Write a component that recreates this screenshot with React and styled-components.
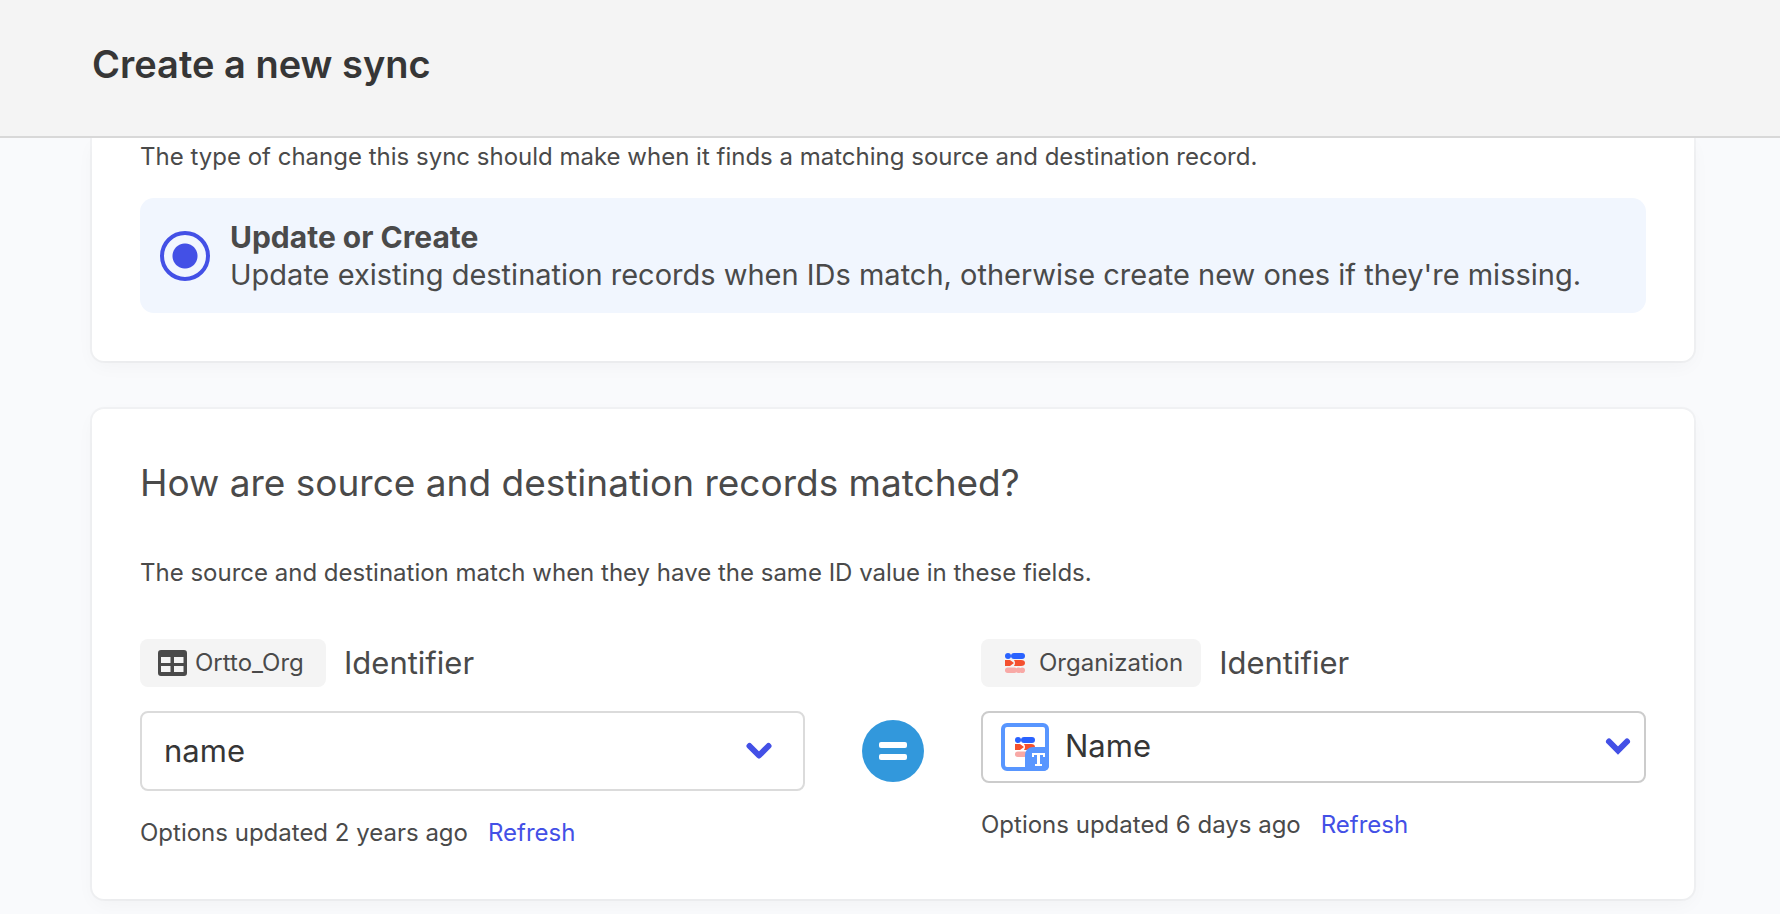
import React from "react";
import styled, { createGlobalStyle } from "styled-components";

const GlobalStyle = createGlobalStyle`
  *, *::before, *::after { box-sizing: border-box; }
  body {
    margin: 0;
    background: #f9fafc;
    color: #4a4a4a;
    font-family: Inter, "Liberation Sans", sans-serif;
    font-size: 24px;
    line-height: 38px;
  }
  h1, h2, p { margin: 0; }
`;

const Header = styled.header`
  position: sticky;
  top: 0;
  z-index: 1;
  padding: 38px 86px 46px 92px;
  background: #f4f4f4;
  border-bottom: 2px solid #d8d8d8;
`;

const PageTitle = styled.h1`
  color: #363636;
  font-size: 38px;
  font-weight: 600;
  line-height: 52px;
`;

const Main = styled.main`
  display: flex;
  flex-direction: column;
  gap: 48px;
  padding: 0 86px 15px 92px;
`;

const Card = styled.section`
  padding: ${(p) => (p.$continued ? "0 48px 48px" : "48px 48px 47px")};
  background: #fff;
  border-radius: ${(p) => (p.$continued ? "0 0 12px 12px" : "12px")};
  box-shadow: 0 0 0 2px rgba(10, 10, 10, 0.03), 0 6px 20px -2px rgba(10, 10, 10, 0.04);
`;

const Question = styled.h2`
  margin-bottom: 45px;
  font-size: 37px;
  font-weight: 400;
  line-height: 52px;
`;

const Option = styled.label`
  display: flex;
  align-items: center;
  gap: 20px;
  margin-top: 22px;
  padding: 20px 20px 19px;
  background: #f1f6fe;
  border-radius: 14px;
  font-size: 29px;
`;

const Radio = styled.input`
  appearance: none;
  flex: none;
  width: 50px;
  height: 50px;
  margin: 0;
  border: 4px solid #4350e6;
  border-radius: 50%;
  background: radial-gradient(circle, #4350e6 12px, transparent 13px);
`;

const OptionText = styled.span`
  display: flex;
  flex-direction: column;
`;

const OptionName = styled.strong`
  font-size: 30px;
`;

const Matching = styled.div`
  display: grid;
  grid-template-columns: minmax(0, 1fr) 176px minmax(0, 1fr);
  margin-top: 47px;
`;

const FieldLabel = styled.label`
  display: flex;
  align-items: center;
  gap: 18px;
  margin-bottom: 24px;
  font-size: 31px;
  line-height: 48px;
`;

const Chip = styled.span`
  display: flex;
  align-items: center;
  gap: 8px;
  min-width: 186px;
  padding: 0 18px;
  background: #f4f4f4;
  border-radius: 8px;
  font-size: 24px;
`;

const SelectBox = styled.div`
  display: flex;
  align-items: center;
  height: ${(p) => (p.$compact ? "72px" : "80px")};
  padding: ${(p) => (p.$compact ? "0 12px 0 18px" : "0 30px 0 22px")};
  border: 2px solid ${(p) => (p.$compact ? "#cccccc" : "#dbdbdb")};
  border-radius: 8px;
  background: #fff;
`;

const Select = styled.select`
  appearance: none;
  flex: 1;
  min-width: 0;
  margin: 0;
  padding: ${(p) => (p.$compact ? "0 0 2px 16px" : "0")};
  border: 0;
  outline: 0;
  background: transparent;
  color: #363636;
  font: inherit;
  font-size: 31px;
`;

const Status = styled.p`
  display: flex;
  gap: 20px;
  margin-top: 23px;
`;

const RefreshButton = styled.button`
  padding: 0;
  border: 0;
  background: none;
  color: #4350e6;
  font: inherit;
  cursor: pointer;
`;

const EqualsCell = styled.div`
  display: flex;
  align-items: center;
  justify-content: center;
  height: 80px;
  margin-top: 72px;
`;

const TableIcon = () => (
  <svg width="29" height="26" viewBox="0 0 29 26" aria-hidden="true">
    <path
      fill="#4a4a4a"
      fillRule="evenodd"
      d="M3 0h23a3 3 0 0 1 3 3v20a3 3 0 0 1-3 3H3a3 3 0 0 1-3-3V3a3 3 0 0 1 3-3zM3 7v6h9.500V7zM16 7v6h9.500V7zM3 16v6h9.500v-6zM16 16v6h9.500v-6z"
    />
  </svg>
);

const LogoShapes = () => (
  <g>
    <circle cx="3" cy="3" r="3" fill="#2962ff" />
    <rect x="6" y="0" width="14" height="6" rx="3" fill="#2962ff" />
    <path fill="#f4502f" d="M0 7h5l4 3-4 3H0zM9 7h7q4 0 4 3t-4 3H9q2-3 0-6z" />
    <rect x="0" y="14.500" width="12" height="5.500" rx="2.700" fill="#f8a9a6" />
    <circle cx="13.500" cy="17.200" r="2.800" fill="#f8a9a6" />
    <circle cx="17.200" cy="17.200" r="2.800" fill="#f8a9a6" />
  </g>
);

const LogoIcon = () => (
  <svg width="32" height="20" viewBox="-6 0 32 20" aria-hidden="true">
    <LogoShapes />
  </svg>
);

const FieldIcon = () => (
  <svg width="48" height="48" viewBox="0 0 48 48" aria-hidden="true">
    <rect x="2" y="2" width="44" height="44" rx="4" fill="#fff" stroke="#5896ff" strokeWidth="4" />
    <g transform="translate(14 14)">
      <LogoShapes />
    </g>
    <path fill="#5896ff" d="M24 32a8 8 0 0 1 8-8h16v19a5 5 0 0 1-5 5H24z" />
    <path fill="none" stroke="#fff" strokeWidth="2" d="M32 34v-3h11v3M34 42h7" />
    <path fill="none" stroke="#fff" strokeWidth="3" d="M37.500 31v11" />
  </svg>
);

const Chevron = ({ sharp }) => (
  <svg width="28" height="20" viewBox="0 0 28 20" aria-hidden="true">
    <path
      d={sharp ? "M5 4.500L14 13.500l9-9" : "M4.500 5L14 14.500 23.500 5"}
      fill="none"
      stroke="#4350e6"
      strokeWidth={6}
      strokeLinecap="round"
      strokeLinejoin={sharp ? "miter" : "round"}
    />
  </svg>
);

const EqualsIcon = () => (
  <svg width="62" height="62" viewBox="0 0 62 62" role="img" aria-label="equals">
    <circle cx="31" cy="31" r="31" fill="#3298dc" />
    <rect x="17" y="22" width="28" height="6" rx="2" fill="#fff" />
    <rect x="17" y="34" width="28" height="6" rx="2" fill="#fff" />
  </svg>
);

function Field({ id, icon, source, value, valueIcon, updated, compact }) {
  return (
    <div>
      <FieldLabel htmlFor={id}>
        <Chip>
          {icon}
          {source}
        </Chip>
        Identifier
      </FieldLabel>
      <SelectBox $compact={compact}>
        {valueIcon}
        <Select id={id} $compact={compact} defaultValue={value}>
          <option value={value}>{value}</option>
        </Select>
        <Chevron sharp={compact} />
      </SelectBox>
      <Status>
        <span>{updated}</span>
        <RefreshButton type="button">Refresh</RefreshButton>
      </Status>
    </div>
  );
}

export default function App() {
  return (
    <>
      <GlobalStyle />
      <Header>
        <PageTitle>Create a new sync</PageTitle>
      </Header>
      <Main>
        <Card $continued>
          <p>The type of change this sync should make when it finds a matching source and destination record.</p>
          <Option>
            <Radio type="radio" name="mode" defaultChecked />
            <OptionText>
              <OptionName>Update or Create</OptionName>
              <span>Update existing destination records when IDs match, otherwise create new ones if they're missing.</span>
            </OptionText>
          </Option>
        </Card>
        <Card>
          <Question>How are source and destination records matched?</Question>
          <p>The source and destination match when they have the same ID value in these fields.</p>
          <Matching>
            <Field
              id="source-field"
              icon={<TableIcon />}
              source="Ortto_Org"
              value="name"
              updated="Options updated 2 years ago"
            />
            <EqualsCell>
              <EqualsIcon />
            </EqualsCell>
            <Field
              id="destination-field"
              icon={<LogoIcon />}
              source="Organization"
              value="Name"
              valueIcon={<FieldIcon />}
              updated="Options updated 6 days ago"
              compact
            />
          </Matching>
        </Card>
      </Main>
    </>
  );
}
